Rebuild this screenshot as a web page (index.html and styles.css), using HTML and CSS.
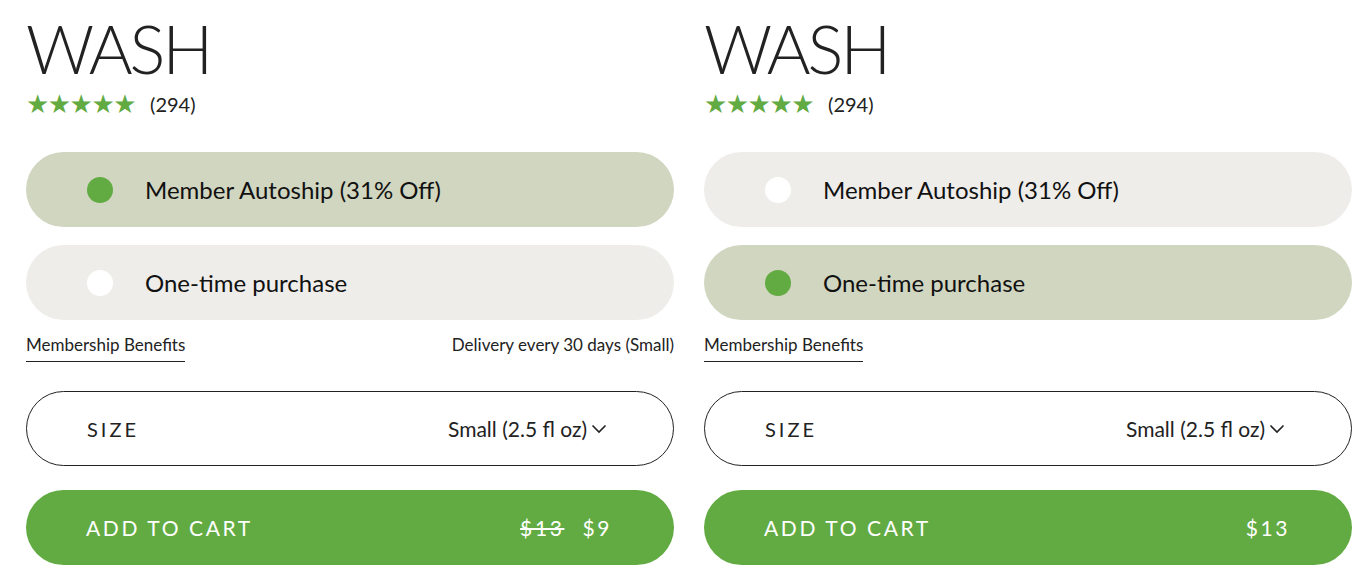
FILE: index.html
```html
<!DOCTYPE html>
<html>
<head>
  <title>Wash</title>
  <link rel="stylesheet" href="styles.css">
</head>
<body>

<div class="page">

  <div class="product">
    <h1 class="title">WASH</h1>
    <div class="rating">
      <span class="stars">★★★★★</span>
      <span class="count">(294)</span>
    </div>
    <div class="options">
      <div class="option selected">
        <span class="radio"></span>
        <span class="label">Member Autoship (31% Off)</span>
      </div>
      <div class="option">
        <span class="radio"></span>
        <span class="label">One-time purchase</span>
      </div>
    </div>
    <div class="meta">
      <a class="benefits">Membership Benefits</a>
      <span class="delivery">Delivery every 30 days (Small)</span>
    </div>
    <div class="size">
      <span class="size-name">SIZE</span>
      <span class="size-value">Small (2.5 fl oz)
        <svg class="chevron" width="16" height="10" viewBox="0 0 16 10"><path d="M1.5 1.5 L8 8 L14.5 1.5" fill="none" stroke="#222" stroke-width="1.6"/></svg>
      </span>
    </div>
    <button class="cart">
      <span>ADD TO CART</span>
      <span class="price"><s>$13</s> $9</span>
    </button>
  </div>

  <div class="product">
    <h1 class="title">WASH</h1>
    <div class="rating">
      <span class="stars">★★★★★</span>
      <span class="count">(294)</span>
    </div>
    <div class="options">
      <div class="option">
        <span class="radio"></span>
        <span class="label">Member Autoship (31% Off)</span>
      </div>
      <div class="option selected">
        <span class="radio"></span>
        <span class="label">One-time purchase</span>
      </div>
    </div>
    <div class="meta">
      <a class="benefits">Membership Benefits</a>
    </div>
    <div class="size">
      <span class="size-name">SIZE</span>
      <span class="size-value">Small (2.5 fl oz)
        <svg class="chevron" width="16" height="10" viewBox="0 0 16 10"><path d="M1.5 1.5 L8 8 L14.5 1.5" fill="none" stroke="#222" stroke-width="1.6"/></svg>
      </span>
    </div>
    <button class="cart">
      <span>ADD TO CART</span>
      <span class="price">$13</span>
    </button>
  </div>

</div>

</body>
</html>
```

FILE: styles.css
```css
* {
  margin: 0;
  padding: 0;
  box-sizing: border-box;
}

body {
  font-family: Lato, "Noto Sans", sans-serif;
  color: #222;
  background: #fff;
}

.page {
  display: flex;
  gap: 30px;
  padding: 0 16px 0 26px;
}

.product {
  width: 648px;
}

.title {
  font-weight: 300;
  font-size: 67px;
  letter-spacing: -3px;
  line-height: 1;
  margin-top: 15px;
  color: #222;
}

.rating {
  display: flex;
  align-items: center;
  gap: 15px;
  margin-top: 9px;
  height: 26px;
}

.stars {
  color: #62ab43;
  font-size: 26px;
  letter-spacing: -1.5px;
  font-family: "DejaVu Sans", sans-serif;
}

.count {
  font-size: 20px;
  font-weight: 400;
}

.options {
  display: flex;
  flex-direction: column;
  gap: 18px;
  margin-top: 35px;
}

.option {
  height: 75px;
  border-radius: 38px;
  background: #eeedea;
  display: flex;
  align-items: center;
  padding-left: 61px;
}

.option.selected {
  background: #d1d6c0;
}

.radio {
  width: 26px;
  height: 26px;
  border-radius: 50%;
  background: #fff;
  margin-right: 32px;
}

.option.selected .radio {
  background: #62ab43;
}

.label {
  font-size: 24px;
  color: #111;
}

.meta {
  display: flex;
  justify-content: space-between;
  margin-top: 14px;
  height: 28px;
  font-size: 17px;
}

.benefits {
  border-bottom: 1px solid #222;
  padding-bottom: 6px;
  align-self: flex-start;
}

.size {
  margin-top: 29px;
  height: 75px;
  border: 1px solid #222;
  border-radius: 38px;
  display: flex;
  align-items: center;
  justify-content: space-between;
  padding: 0 66px 0 60px;
}

.size-name {
  font-size: 20px;
  letter-spacing: 3px;
}

.size-value {
  font-size: 21px;
  display: flex;
  align-items: center;
  gap: 4px;
}

.cart {
  margin-top: 24px;
  width: 100%;
  height: 75px;
  border: none;
  border-radius: 38px;
  background: #62ab43;
  color: #fff;
  font-family: inherit;
  font-size: 21px;
  letter-spacing: 2.6px;
  display: flex;
  align-items: center;
  justify-content: space-between;
  padding: 0 62px 0 60px;
}

.price s {
  margin-right: 10px;
}
```
